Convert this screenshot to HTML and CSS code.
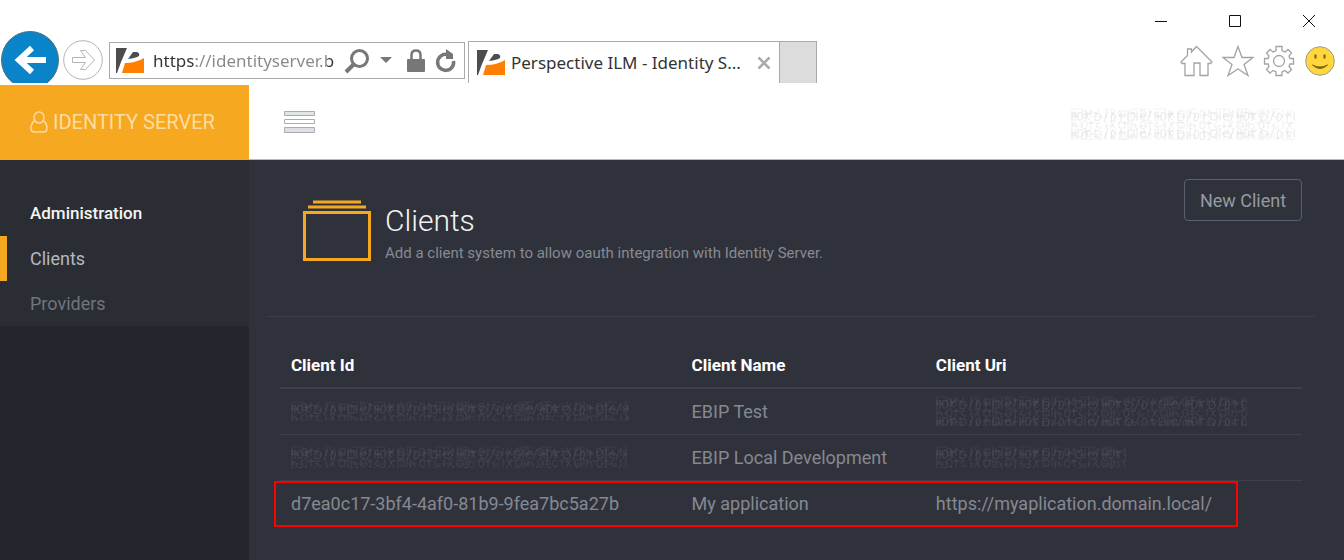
FILE: index.html
```html
<!DOCTYPE html>
<html lang="en">
<head>
<meta charset="utf-8">
<title>Perspective ILM - Identity Server</title>
<link rel="stylesheet" href="styles.css">
</head>
<body>
<svg class="defs" aria-hidden="true">
  <defs>
    <symbol id="favicon" viewBox="0 0 28 27">
      <path fill="#4d4d4d" d="M0 1h11L5 15 1 26H0z"/>
      <path fill="#4d4d4d" d="M17 5h4q3 1 2 4-3 2-11 3z"/>
      <path fill="#ff7f00" d="M9 16q11 0 19-5v15H6z"/>
    </symbol>
    <pattern id="smudge-a" width="83" height="17" patternUnits="userSpaceOnUse">
      <g fill="none" stroke="currentColor" stroke-width="1">
        <path opacity=".6" d="M1 4v9M4 4v9M1 8h6M7 5q5-2 5 3t-5 4zM15 3v10M13 6h6M18 12q-5-6 2-7M24 4v9M24 6q6-2 6 3t-6 3M37 3l-4 11M41 5q6 0 2 8h-3zM50 4v9M48 7h6M57 5h6v7h-6zM66 3v10M69 8q5-5 6 0h-6q0 5 6 4M80 3l-4 11"/>
        <path opacity=".3" d="M0 1h12M16 15h14M34 1h9M46 15h13M61 1h16M3 14v3M10 14v3M27 0v3M54 14v3M70 0v3"/>
      </g>
    </pattern>
    <pattern id="smudge-b" width="59" height="11" patternUnits="userSpaceOnUse">
      <g fill="none" stroke="currentColor" stroke-width="1" opacity=".45">
        <path d="M1 2v8M1 6q5-4 5 4M11 3q5-2 5 3t-5 3zM20 1v9M18 4h5M28 3q-5 3-1 6h4M35 2v8M39 2l5 8M44 2l-5 8M48 3h6v6h-6zM57 1v9"/>
      </g>
    </pattern>
    <symbol id="smudge">
      <rect width="100%" height="100%" fill="url(#smudge-a)"/>
      <rect width="100%" height="100%" fill="url(#smudge-b)"/>
    </symbol>
  </defs>
</svg>
<div class="window">
  <header class="chrome">
    <div class="titlebar">
      <button class="win" type="button" aria-label="Minimize"><svg width="14" height="14" viewBox="0 0 14 14"><path d="M1 7.500h12"/></svg></button>
      <button class="win" type="button" aria-label="Maximize"><svg width="14" height="14" viewBox="0 0 14 14"><path d="M1.500 1.500h11v11h-11z"/></svg></button>
      <button class="win" type="button" aria-label="Close"><svg width="14" height="14" viewBox="0 0 14 14"><path d="M1 1l12 12M13 1L1 13"/></svg></button>
    </div>
    <div class="toolbar">
      <button class="back" type="button" aria-label="Back"><svg width="58" height="52" viewBox="0 0 58 52"><circle cx="29" cy="29" r="28.500" fill="#0a84c8" stroke="#5b6d78"/><path d="M45 29H18M31 17L18 29l13 12" fill="none" stroke="#fff" stroke-width="6"/></svg></button>
      <button class="forward" type="button" aria-label="Forward"><svg width="40" height="40" viewBox="0 0 40 40"><g fill="#fff" stroke="#b4b4b4"><circle cx="20" cy="20" r="19.300"/><path d="M9.500 17.500h13l-5-7h5l9 9.500-9 9.500h-5l5-7h-13z"/></g></svg></button>
      <div class="address">
        <svg class="fav" width="28" height="27"><use href="#favicon"/></svg>
        <input class="url" type="text" aria-label="Address" value="https://identityserver.b">
        <button class="tool" type="button" aria-label="Search"><svg width="26" height="26" viewBox="0 0 26 26"><g fill="none" stroke="#777" stroke-width="3"><circle cx="15.500" cy="10.500" r="8"/><path d="M10 16l-8 8" stroke-width="4"/></g></svg></button>
        <button class="tool drop" type="button" aria-label="Show history"><svg width="12" height="7" viewBox="0 0 12 7"><path d="M0 0h12L6 6z" fill="#777"/></svg></button>
        <svg class="lock" width="18" height="23" viewBox="0 0 18 23" role="img" aria-label="Secure"><path d="M4.500 10V6q0-4.500 4.500-4.500T13.500 6v4" fill="none" stroke="#777" stroke-width="2.500"/><rect y="10" width="18" height="13" rx="1" fill="#777"/></svg>
        <button class="tool" type="button" aria-label="Refresh"><svg width="22" height="24" viewBox="0 0 22 24"><path d="M12 5.500A8 8 0 1 0 18.500 12" fill="none" stroke="#777" stroke-width="3.500"/><path d="M11 0l7 5v5h-7z" fill="#777"/></svg></button>
      </div>
      <div class="tab">
        <svg class="fav" width="28" height="27"><use href="#favicon"/></svg>
        <span class="tab-title">Perspective ILM - Identity S...</span>
        <button class="tool" type="button" aria-label="Close tab"><svg width="14" height="14" viewBox="0 0 14 14"><path d="M1.500 1.500l11 11M12.500 1.500l-11 11" stroke="#aaa" stroke-width="2.500"/></svg></button>
      </div>
      <button class="new-tab" type="button" aria-label="New tab"></button>
      <div class="actions">
        <button class="tool" type="button" aria-label="Home"><svg width="33" height="32" viewBox="0 0 33 32"><path d="M1 17L7.500 10.500V4h4v3L16.500 1.500 32 17l-1.500 1.500H28V30.500h-8V18h-6v12.500H5v-12H2z" fill="none" stroke="#a3a3a3" stroke-width="1.300"/></svg></button>
        <button class="tool" type="button" aria-label="Favorites"><svg width="32" height="32" viewBox="0 0 32 32"><path d="M16 1.500l4 11h11l-9 7 4 11-10-6.500-10 6.500 4-11-9-7h11z" fill="none" stroke="#a3a3a3" stroke-width="1.300"/></svg></button>
        <button class="tool" type="button" aria-label="Tools"><svg width="32" height="32" viewBox="0 0 32 32"><g fill="none" stroke="#a3a3a3" stroke-width="1.300"><path d="M13 1.500h6v4l3 1.500 3-2.500 3.500 3.500-2.500 3 1 2.500h3.500v5.500H27l-1 2.500 2.500 3-3.500 3.500-3-2.500-3 1.500v3.500h-6V27l-3-1.500L7 28l-3.500-3.500 2.500-3L5 19H1.500v-5.500H5L6 11 3.500 8 7 4.500 10 7l3-1.500z"/><circle cx="16" cy="16" r="5.500"/></g></svg></button>
        <button class="tool" type="button" aria-label="Feedback"><svg width="32" height="32" viewBox="0 0 32 32"><circle cx="16" cy="16" r="14.300" fill="#ffd63c" stroke="#a39e8c"/><path d="M11.500 9.500v4M20.500 9.500v4" stroke="#80651c" stroke-width="2.200"/><path d="M8.500 20q7.500 7 15 0-7.500 4-15 0z" fill="#80651c" stroke="#80651c"/></svg></button>
      </div>
    </div>
  </header>

  <div class="topbar">
    <a class="brand" href="#"><svg width="18" height="22" viewBox="0 0 18 22"><g fill="none" stroke="currentColor" stroke-width="1.500"><ellipse cx="9" cy="6.500" rx="5" ry="5.500"/><path d="M5 9.500Q1 12 1 17.500q0 3.500 3.500 3.500h9q3.500 0 3.500-3.500 0-5.500-4-8"/></g></svg><span>IDENTITY SERVER</span></a>
    <button class="menu" type="button" aria-label="Toggle menu"><svg width="31" height="24" viewBox="0 0 31 24"><g stroke="#a9adb2"><path fill="#dfe4e6" d="M.5 1.500h30v4H.5z"/><path fill="#fff" d="M.5 9.500h30v4H.5z"/><path fill="#dddfe4" d="M.5 17.500h30v5H.5z"/></g></svg></button>
    <button class="account" type="button" aria-label="Account"><svg width="224" height="32"><use href="#smudge"/></svg></button>
  </div>

  <div class="body">
    <aside class="sidebar">
      <nav class="nav" aria-label="Administration">
        <h2 class="nav-title">Administration</h2>
        <a class="nav-link active" href="#">Clients</a>
        <a class="nav-link" href="#">Providers</a>
      </nav>
    </aside>
    <main class="main">
      <section class="page-head">
        <svg class="page-icon" width="68" height="62" viewBox="0 0 68 62"><g fill="none" stroke="#f6a821" stroke-width="3"><path d="M10 2h48M5 7h58M1.500 12.500h65v47h-65z"/></g></svg>
        <div class="page-text">
          <h1>Clients</h1>
          <p>Add a client system to allow oauth integration with Identity Server.</p>
        </div>
        <button class="new-client" type="button">New Client</button>
      </section>
      <div class="table-area">
        <table class="clients">
          <thead><tr><th class="col-id">Client Id</th><th class="col-name">Client Name</th><th>Client Uri</th></tr></thead>
          <tbody>
            <tr><td><svg class="hidden-value" role="img" aria-label="Hidden client id" width="338" height="20"><use href="#smudge"/></svg></td><td>EBIP Test</td><td><svg class="hidden-value" role="img" aria-label="Hidden uri" width="311" height="30"><use href="#smudge"/></svg></td></tr>
            <tr><td><svg class="hidden-value" role="img" aria-label="Hidden client id" width="336" height="22"><use href="#smudge"/></svg></td><td>EBIP Local Development</td><td><svg class="hidden-value" role="img" aria-label="Hidden uri" width="190" height="22"><use href="#smudge"/></svg></td></tr>
            <tr class="marked"><td>d7ea0c17-3bf4-4af0-81b9-9fea7bc5a27b<span class="marker"></span></td><td>My application</td><td>https://myaplication.domain.local/</td></tr>
          </tbody>
        </table>
      </div>
    </main>
  </div>
</div>
</body>
</html>
```
FILE: styles.css
```css
* { box-sizing: border-box; }
body { margin: 0; background: #30323b; font-family: Roboto, "Liberation Sans", sans-serif; font-size: 18px; color: #858991; }
button { margin: 0; padding: 0; border: 0; background: none; font: inherit; color: inherit; }
a { color: inherit; text-decoration: none; }
svg { display: block; flex: none; }
.defs { position: absolute; width: 0; height: 0; color: #90949c; }
.window { display: flex; flex-direction: column; min-height: 100vh; }

.chrome { background: #fff; font-family: "Noto Sans", sans-serif; }
.titlebar { display: flex; justify-content: flex-end; gap: 60px; padding: 14px 28px 3px 0; }
.win { fill: none; stroke: #111; stroke-width: 1; }
.toolbar { display: flex; align-items: flex-start; height: 54px; }
.back { margin-left: 1px; }
.forward { margin: 9px 6px 0 4px; }
.address { display: flex; align-items: center; width: 356px; height: 37px; margin-top: 11px; padding: 0 7px 0 6px; border: 1px solid #aaa; }
.url { width: 183px; margin: 0 8px 0 9px; padding: 0; border: 0; font: 17px "Noto Sans", sans-serif; color: transparent; background: linear-gradient(90deg, #333 43px, #888 43px, #888 174px, #333 174px); background-clip: text; }
.drop { margin: 0 15px 0 10px; }
.lock { margin-right: 10px; }
.tab { display: flex; align-items: center; width: 311px; height: 42px; margin: 10px 0 0 3px; padding: 0 8px 0 8px; border: solid #aaa; border-width: 1px 0 0 1px; color: #333; font-size: 17px; }
.tab-title { flex: 1; margin-left: 6px; white-space: nowrap; }
.new-tab { width: 38px; height: 42px; margin-top: 10px; border: 1px solid #aaa; border-bottom: 0; background: #dcdcdc; }
.actions { display: flex; gap: 9px; margin: 14px 8px 0 auto; }

.topbar { display: flex; align-items: center; height: 75px; background: #fff; border-bottom: 1px solid #b9babd; }
.brand { display: flex; align-items: center; gap: 5px; width: 249px; height: 75px; padding-left: 30px; background: #f6a821; color: #fddca0; font-size: 20px; }
.menu { margin-left: 35px; }
.account { margin: 4px 49px 0 auto; opacity: .35; }

.body { display: flex; flex: 1; }
.sidebar { width: 249px; background: #24262e; }
.nav { padding: 31px 0 0; background: #2b2d35; }
.nav-title { margin: 0; padding: 0 30px; font-size: 17px; font-weight: 500; line-height: 45px; color: #f4f4f4; }
.nav-link { display: block; padding: 0 30px; line-height: 45px; color: #70757e; }
.nav-link.active { padding-left: 23px; border-left: 7px solid #f6a821; color: #b4b8bf; }

.main { flex: 1; min-width: 0; padding: 19px 29px 0 19px; }
.page-head { display: flex; align-items: flex-start; height: 138px; padding: 0 13px 0 35px; border-bottom: 1px solid #3c3e4b; }
.page-icon { margin: 21px 14px 0 0; }
.page-text { flex: 1; padding-top: 24px; }
h1 { margin: 0; font-size: 30px; font-weight: 300; line-height: 36px; color: #f2f2f2; }
p { margin: 5px 0 0; font-size: 15px; line-height: 18px; color: #868a92; }
.new-client { width: 118px; height: 42px; border: 1px solid #5b5f72; border-radius: 4px; color: #949ba2; }

.table-area { padding: 24px 13px 0 12px; }
.clients { width: 100%; table-layout: fixed; border-collapse: collapse; }
.clients th, .clients td { height: 46px; padding: 0 0 0 11px; text-align: left; border-bottom: 1px solid #3d3f4c; }
.clients th { height: 47px; padding-top: 2px; border-bottom-width: 2px; color: #fff; font-size: 17px; font-weight: 700; }
.clients .marked td { height: 47px; border-bottom: 0; }
.col-id { width: 39.2%; }
.col-name { width: 23.9%; }
.hidden-value { opacity: .35; }
.marked { position: relative; }
.marker { position: absolute; inset: 1px 64px 0 -6px; border: 2px solid #f00; }
```
